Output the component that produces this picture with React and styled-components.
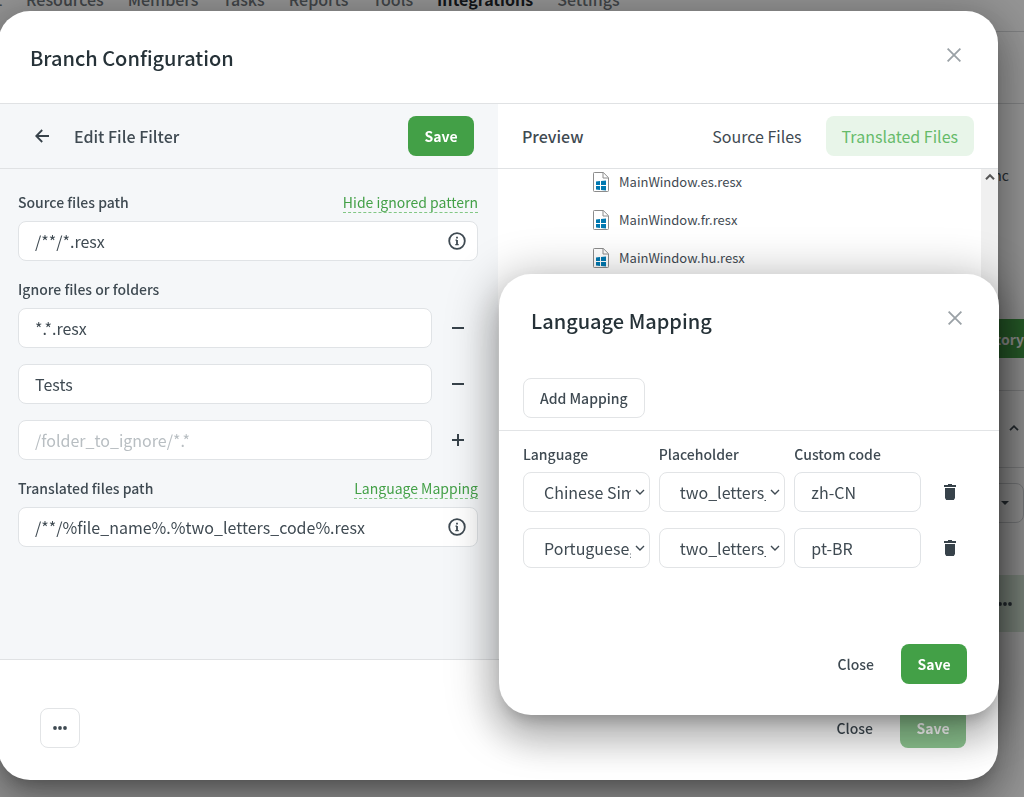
import React from "react";
import styled, { createGlobalStyle, css } from "styled-components";

const GlobalStyle = createGlobalStyle`
  *, *::before, *::after { box-sizing: border-box; }
  html, body { margin: 0; height: 100%; }
  body {
    overflow: hidden;
    font-family: "Noto Sans CJK SC", "Source Sans Pro", sans-serif;
    font-size: 14px;
    line-height: 24px;
    color: #3f4a52;
    background: #fff;
  }
  button, input, select { font: inherit; color: inherit; }
  button { cursor: pointer; }
  svg { display: block; flex: none; }
`;

/* ---------- Page behind the dialogs ---------- */

const Page = styled.div`
  height: 100vh;
  overflow: hidden;
`;

const Nav = styled.nav`
  display: flex;
  align-items: center;
  gap: 24px;
  height: 66px;
  margin-top: -34px;
  margin-left: -48px;
  border-bottom: 1px solid #d8dadc;
  a:first-child { width: 50px; text-align: right; }
`;

const NavLink = styled.a`
  font-size: 16px;
  font-weight: ${(p) => (p.$active ? 700 : 500)};
  color: ${(p) => (p.$active ? "#1f272d" : "#70777c")};
  text-decoration: none;
`;

const Band = styled.section`
  display: flex;
  flex-direction: column;
  align-items: flex-end;
  padding: ${(p) => p.$pad || "0"};
  min-height: ${(p) => p.$h || "0"};
  ${(p) => p.$line && "border-bottom: 1px solid #d8dadc;"}
  background: ${(p) => p.$bg || "transparent"};
`;

const SyncBand = styled(Band)`
  gap: 132px;
`;

const SyncText = styled.span`
  padding-right: 15px;
`;

const RepoButton = styled.button`
  height: 39px;
  margin-right: -16px;
  padding: 0 16px;
  border: 0;
  border-radius: 8px;
  background: #43a047;
  color: #fff;
  font-weight: 700;
`;

const DropButton = styled.button`
  display: flex;
  align-items: center;
  justify-content: flex-end;
  width: 120px;
  height: 40px;
  padding: 0 14px;
  border: 1px solid #d0d3d6;
  border-radius: 8px;
  background: transparent;
`;

/* ---------- Dialog parts ---------- */

const Scrim = styled.div`
  position: fixed;
  inset: 0;
  display: flex;
  padding: 11px 26px 17px 0;
  background: rgba(0, 0, 0, 0.42);
`;

const dialogSurface = css`
  display: flex;
  flex-direction: column;
  border-radius: 32px;
  background: #fff;
  box-shadow:
    0 11px 15px -7px rgba(0, 0, 0, 0.2),
    0 24px 38px 3px rgba(0, 0, 0, 0.14),
    0 9px 46px 8px rgba(0, 0, 0, 0.28);
`;

const BranchDialog = styled.div`
  ${dialogSurface}
  flex: 1;
  min-width: 0;
  margin-left: -2px;
`;

const MappingDialog = styled.div`
  ${dialogSurface}
  position: fixed;
  right: 25px;
  bottom: 82px;
  width: 500px;
`;

const DialogHeader = styled.header`
  display: flex;
  align-items: center;
  justify-content: space-between;
  min-height: 88px;
  padding: 0 32px;
  margin-bottom: ${(p) => p.$gap || "0"};
`;

const DialogTitle = styled.h2`
  margin: 0;
  padding-top: 6px;
  font-size: 20px;
  line-height: 32px;
  font-weight: 500;
  color: #263238;
`;

const IconButton = styled.button`
  display: flex;
  align-items: center;
  justify-content: center;
  width: ${(p) => p.$w || "24px"};
  height: 40px;
  padding: 0;
  border: 0;
  background: none;
  color: ${(p) => p.$color || "#37424a"};
`;

const Columns = styled.div`
  flex: 1;
  display: grid;
  grid-template-columns: 1fr 1fr;
  min-height: 0;
  border-top: 1px solid #e0e2e4;
  border-bottom: 1px solid #e0e2e4;
`;

const Column = styled.section`
  display: flex;
  flex-direction: column;
  min-width: 0;
  background: ${(p) => p.$bg || "#fff"};
`;

const Toolbar = styled.div`
  display: flex;
  align-items: center;
  gap: ${(p) => p.$gap || "8px"};
  height: 65px;
  padding: 0 24px;
  border-bottom: 1px solid #e0e2e4;
`;

const ToolbarTitle = styled.h3`
  flex: 1;
  margin: 0;
  font-size: 16px;
  font-weight: 500;
`;

const Button = styled.button`
  height: 40px;
  padding: 0 16px;
  border: 1px solid transparent;
  border-radius: 8px;
  background: none;
  font-weight: 500;
  white-space: nowrap;
`;

const PrimaryButton = styled(Button)`
  width: 66px;
  padding: 0;
  background: #43a047;
  color: #fff;
  font-weight: 700;
  &:disabled { opacity: 0.6; }
`;

const OutlineButton = styled(Button)`
  border-color: #e2e4e6;
  background: #fff;
`;

const MoreButton = styled(OutlineButton)`
  display: flex;
  align-items: center;
  justify-content: center;
  width: 40px;
  padding: 0;
  margin-right: auto;
`;

const TabButton = styled(Button)`
  padding: 0 15px;
  font-size: 16px;
  font-weight: 400;
  background: ${(p) => (p.$active ? "#e8f5e9" : "none")};
  color: ${(p) => (p.$active ? "#66bb6a" : "inherit")};
`;

const Form = styled.form`
  display: flex;
  flex-direction: column;
  padding: 20px;
  gap: 15px;
`;

const Field = styled.div`
  display: flex;
  flex-direction: column;
  gap: 6px;
`;

const FieldHead = styled.div`
  display: flex;
  align-items: center;
  justify-content: space-between;
  height: 26px;
`;

const Label = styled.label`
  font-weight: 500;
`;

const DottedLink = styled.a`
  line-height: 20px;
  color: #43a047;
  text-decoration: none;
  border-bottom: 1px dashed #81c784;
`;

const InputBox = styled.div`
  flex: 1 0 auto;
  display: flex;
  align-items: center;
  min-width: 0;
  height: 40px;
  padding: 0 11px 0 16px;
  border: 1px solid #e0e3e6;
  border-radius: 8px;
  background: #fff;
`;

const CellInput = styled(InputBox)`
  flex: 1 1 0;
`;

const TextInput = styled.input`
  flex: 1;
  min-width: 0;
  width: 100%;
  padding: 0;
  border: 0;
  outline: 0;
  background: none;
  font-size: 16px;
  &::placeholder { color: #b8bec2; opacity: 1; }
`;

const Stack = styled.div`
  display: flex;
  flex-direction: column;
  gap: 16px;
`;

const IgnoreRow = styled.div`
  display: flex;
  gap: 6px;
`;

const Preview = styled.div`
  flex: 1;
  display: flex;
  min-height: 0;
`;

const FileList = styled.ul`
  flex: 1;
  display: flex;
  flex-direction: column;
  gap: 12px;
  margin: 0;
  padding: 0 0 0 95px;
  overflow: hidden;
  list-style: none;
`;

const FileItem = styled.li`
  display: flex;
  align-items: center;
  gap: 10px;
  height: 26px;
  font-size: 13px;
`;

const ScrollTrack = styled.div`
  display: flex;
  justify-content: center;
  width: 17px;
  padding-top: 4px;
  background: #f0f0f0;
  color: #555;
`;

const DialogFooter = styled.footer`
  display: flex;
  align-items: center;
  justify-content: flex-end;
  gap: 10px;
  padding: ${(p) => p.$pad};
`;

const MappingActions = styled.div`
  padding: 0 24px 12px;
  border-bottom: 1px solid #e2e4e6;
`;

const MappingTable = styled.table`
  display: block;
  width: 100%;
  padding: 11px 29px 0 24px;
  thead, tbody { display: block; }
`;

const MappingRow = styled.tr`
  display: grid;
  grid-template-columns: 1fr 1fr 1fr 40px;
  gap: 9px;
  margin-bottom: ${(p) => p.$gap};
`;

const HeadCell = styled.th`
  padding: 0;
  text-align: left;
  font-weight: 500;
`;

const Cell = styled.td`
  display: flex;
  min-width: 0;
  padding: 0;
`;

const SelectBox = styled.div`
  position: relative;
  flex: 1;
  min-width: 0;
  svg { position: absolute; right: 5px; top: 16px; pointer-events: none; }
`;

const Select = styled.select`
  appearance: none;
  width: 100%;
  height: 40px;
  padding: 0 18px 0 20px;
  border: 1px solid #e2e4e6;
  border-radius: 8px;
  background: #fff;
  font-size: 16px;
`;

/* ---------- Icons ---------- */

const CloseIcon = () => (
  <svg width="14" height="14" viewBox="0 0 14 14" fill="none" stroke="currentColor" strokeWidth="1.8">
    <path d="M.6.6l12.8 12.8M13.4.6L.6 13.4" />
  </svg>
);

const BackIcon = () => (
  <svg width="14" height="14" viewBox="0 0 14 14" fill="none" stroke="currentColor" strokeWidth="1.8">
    <path d="M14 7H1.4M7.2 1L1.2 7l6 6" />
  </svg>
);

const InfoIcon = () => (
  <svg width="18" height="18" viewBox="0 0 18 18" fill="none" stroke="currentColor" strokeWidth="1.8">
    <circle cx="9" cy="9" r="7.8" />
    <path d="M9 8v5M9 4.8v1.8" />
    <path d="M7.5 8.2H9M7.3 12.6h3.4" strokeWidth="1.2" />
  </svg>
);

const SignIcon = ({ plus }) => (
  <svg width="14" height="14" viewBox="0 0 14 14" fill="none" stroke="currentColor" strokeWidth="2">
    <path d={plus ? "M1 7h12M7 1v12" : "M1 7h12"} />
  </svg>
);

const DotsIcon = () => (
  <svg width="14" height="4" viewBox="0 0 14 4" fill="currentColor">
    <circle cx="2" cy="2" r="1.9" />
    <circle cx="7" cy="2" r="1.9" />
    <circle cx="12" cy="2" r="1.9" />
  </svg>
);

const Chevron = ({ up, stroke = 1.4 }) => (
  <svg width="10" height="8" viewBox="0 0 10 8" fill="none" stroke="currentColor" strokeWidth={stroke}>
    <path d={up ? "M1 6.2l4-4 4 4" : "M1 2l4 4 4-4"} />
  </svg>
);

const CaretIcon = () => (
  <svg width="8" height="4" viewBox="0 0 8 4" fill="currentColor">
    <path d="M0 0h8L4 4z" />
  </svg>
);

const TrashIcon = () => (
  <svg width="12" height="16" viewBox="0 0 12 16" fill="currentColor">
    <path d="M0 1h4V0h4v1h4v2H0zM1 4h10v10l-1.200 2H2.200L1 14z" />
  </svg>
);

const WindowsFileIcon = () => (
  <svg width="16" height="20" viewBox="0 0 16 20" fill="none">
    <path d="M1.3.5h9l5.2 5.2v13a.8.8 0 0 1-.8.8H1.3a.8.8 0 0 1-.8-.8V1.3a.8.8 0 0 1 .8-.8z" fill="#fff" stroke="#8c8c8c" />
    <path d="M10 .5V6h5.5" stroke="#8c8c8c" />
    <path d="M3 9.6l4-.5v4H3zM8 9l5-.6v4.7H8zM3 14h4v4l-4-.5zM8 14h5v4.6l-5-.6z" fill="#0078b0" />
  </svg>
);

/* ---------- Data ---------- */

const navItems = ["t", "Resources", "Members", "Tasks", "Reports", "Tools", "Integrations", "Settings"];
const files = ["MainWindow.es.resx", "MainWindow.fr.resx", "MainWindow.hu.resx"];
const ignored = ["*.*.resx", "Tests", ""];
const mappings = [
  { language: "Chinese Simplified", code: "zh-CN" },
  { language: "Portuguese, Brazilian", code: "pt-BR" },
];

const MappingSelect = ({ label, value }) => (
  <SelectBox>
    <Select aria-label={label} defaultValue={value}>
      <option>{value}</option>
    </Select>
    <Chevron />
  </SelectBox>
);

const PathField = ({ id, label, link, value }) => (
  <Field>
    <FieldHead>
      <Label htmlFor={id}>{label}</Label>
      <DottedLink href="#">{link}</DottedLink>
    </FieldHead>
    <InputBox>
      <TextInput id={id} defaultValue={value} />
      <InfoIcon />
    </InputBox>
  </Field>
);

export default function App() {
  return (
    <>
      <GlobalStyle />
      <Page>
        <Nav>
          {navItems.map((item) => (
            <NavLink key={item} href="#" $active={item === "Integrations"}>{item}</NavLink>
          ))}
        </Nav>
        <Band $h="72px" $line />
        <SyncBand $pad="59px 0 32px" $line>
          <SyncText>Sync</SyncText>
          <RepoButton>Add Repository</RepoButton>
        </SyncBand>
        <Band $pad="33px 5px 0 0" $h="77px" $line>
          <Chevron up stroke={1.8} />
        </Band>
        <Band $pad="15px 0 52px">
          <DropButton aria-label="Filter"><CaretIcon /></DropButton>
        </Band>
        <Band $pad="27px 12px 0 0" $h="57px" $bg="#d7e8d8">
          <DotsIcon />
        </Band>
      </Page>

      <Scrim>
        <BranchDialog role="dialog" aria-labelledby="branch-title">
          <DialogHeader $gap="4px">
            <DialogTitle id="branch-title">Branch Configuration</DialogTitle>
            <IconButton $color="#9aa1a6" aria-label="Close dialog"><CloseIcon /></IconButton>
          </DialogHeader>

          <Columns>
            <Column $bg="#f5f7f9">
              <Toolbar $gap="12px">
                <IconButton $w="40px" aria-label="Back"><BackIcon /></IconButton>
                <ToolbarTitle>Edit File Filter</ToolbarTitle>
                <PrimaryButton>Save</PrimaryButton>
              </Toolbar>
              <Form onSubmit={(e) => e.preventDefault()}>
                <PathField
                  id="source"
                  label="Source files path"
                  link="Hide ignored pattern"
                  value="/**/*.resx"
                />
                <Field>
                  <FieldHead>
                    <Label htmlFor="ignore-0">Ignore files or folders</Label>
                  </FieldHead>
                  <Stack>
                    {ignored.map((value, i) => (
                      <IgnoreRow key={i}>
                        <InputBox>
                          <TextInput
                            id={`ignore-${i}`}
                            aria-label="Ignore files or folders"
                            defaultValue={value}
                            placeholder="/folder_to_ignore/*.*"
                          />
                        </InputBox>
                        <IconButton type="button" $w="40px" aria-label={value ? "Remove" : "Add"}>
                          <SignIcon plus={!value} />
                        </IconButton>
                      </IgnoreRow>
                    ))}
                  </Stack>
                </Field>
                <PathField
                  id="translated"
                  label="Translated files path"
                  link="Language Mapping"
                  value="/**/%file_name%.%two_letters_code%.resx"
                />
              </Form>
            </Column>

            <Column>
              <Toolbar>
                <ToolbarTitle>Preview</ToolbarTitle>
                <TabButton>Source Files</TabButton>
                <TabButton $active>Translated Files</TabButton>
              </Toolbar>
              <Preview>
                <FileList>
                  {files.map((name) => (
                    <FileItem key={name}><WindowsFileIcon />{name}</FileItem>
                  ))}
                </FileList>
                <ScrollTrack><Chevron up stroke={2} /></ScrollTrack>
              </Preview>
            </Column>
          </Columns>

          <DialogFooter $pad="48px 32px 32px 42px">
            <MoreButton aria-label="More"><DotsIcon /></MoreButton>
            <Button>Close</Button>
            <PrimaryButton disabled>Save</PrimaryButton>
          </DialogFooter>
        </BranchDialog>
      </Scrim>

      <MappingDialog role="dialog" aria-labelledby="mapping-title">
        <DialogHeader $gap="16px">
          <DialogTitle id="mapping-title">Language Mapping</DialogTitle>
          <IconButton $color="#9aa1a6" aria-label="Close dialog"><CloseIcon /></IconButton>
        </DialogHeader>
        <MappingActions>
          <OutlineButton>Add Mapping</OutlineButton>
        </MappingActions>
        <MappingTable>
          <thead>
            <MappingRow $gap="6px">
              <HeadCell>Language</HeadCell>
              <HeadCell>Placeholder</HeadCell>
              <HeadCell>Custom code</HeadCell>
            </MappingRow>
          </thead>
          <tbody>
            {mappings.map((m) => (
              <MappingRow key={m.code} $gap="16px">
                <Cell><MappingSelect label="Language" value={m.language} /></Cell>
                <Cell><MappingSelect label="Placeholder" value="two_letters_code" /></Cell>
                <Cell>
                  <CellInput>
                    <TextInput aria-label="Custom code" defaultValue={m.code} />
                  </CellInput>
                </Cell>
                <Cell>
                  <IconButton $w="40px" aria-label="Delete mapping"><TrashIcon /></IconButton>
                </Cell>
              </MappingRow>
            ))}
          </tbody>
        </MappingTable>
        <DialogFooter $pad="60px 32px 31px">
          <Button>Close</Button>
          <PrimaryButton>Save</PrimaryButton>
        </DialogFooter>
      </MappingDialog>
    </>
  );
}
